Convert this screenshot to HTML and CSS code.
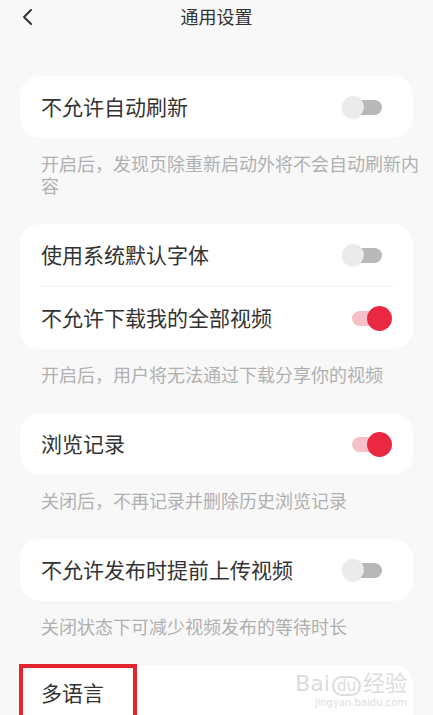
FILE: index.html
```html
<!DOCTYPE html>
<html lang="zh-CN">
<head>
<meta charset="UTF-8">
<meta name="viewport" content="width=device-width, initial-scale=1.0">
<title>通用设置</title>
<link rel="stylesheet" href="styles.css">
</head>
<body>
<div class="header">
    <svg class="back" width="12" height="18" viewBox="0 0 12 18">
        <path d="M10 2 L3 9 L10 16" fill="none" stroke="#333" stroke-width="2" stroke-linecap="round" stroke-linejoin="round"/>
    </svg>
    <div class="title">通用设置</div>
</div>

<div class="content">
    <div class="card">
        <div class="row">
            <span class="label">不允许自动刷新</span>
            <span class="toggle"><span class="track"></span><span class="knob"></span></span>
        </div>
    </div>
    <div class="desc">开启后，发现页除重新启动外将不会自动刷新内容</div>

    <div class="card">
        <div class="row">
            <span class="label">使用系统默认字体</span>
            <span class="toggle"><span class="track"></span><span class="knob"></span></span>
        </div>
        <div class="divider"></div>
        <div class="row">
            <span class="label">不允许下载我的全部视频</span>
            <span class="toggle on"><span class="track"></span><span class="knob"></span></span>
        </div>
    </div>
    <div class="desc">开启后，用户将无法通过下载分享你的视频</div>

    <div class="card">
        <div class="row">
            <span class="label">浏览记录</span>
            <span class="toggle on"><span class="track"></span><span class="knob"></span></span>
        </div>
    </div>
    <div class="desc">关闭后，不再记录并删除历史浏览记录</div>

    <div class="card">
        <div class="row">
            <span class="label">不允许发布时提前上传视频</span>
            <span class="toggle"><span class="track"></span><span class="knob"></span></span>
        </div>
    </div>
    <div class="desc">关闭状态下可减少视频发布的等待时长</div>

    <div class="card last">
        <div class="row">
            <span class="label">多语言</span>
        </div>
        <span class="mark"></span>
        <span class="watermark">Bai<span class="du">du</span>经验<small>jingyan.baidu.com</small></span>
    </div>
</div>
</body>
</html>
```

FILE: styles.css
```css
/* pagina de ajustes */
body {
    margin: 0;
    background-color: #f8f8f8;
    font-family: "Noto Sans CJK SC", "Noto Sans", sans-serif;
    color: #333;
    overflow: hidden;
}

.header {
    position: relative;
    height: 36px;
    display: flex;
    align-items: center;
    justify-content: center;
}
.back {
    position: absolute;
    left: 21px;
    top: 8px;
}
.title {
    font-size: 18px;
    color: #333;
    line-height: 36px;
    margin-top: -4px;
}

.content {
    padding: 40px 20px 0;
}

.card {
    background-color: #fff;
    border-radius: 20px;
    padding: 0 21px;
}
.card.last {
    position: relative;
    height: 80px;
}

.row {
    height: 62px;
    display: flex;
    align-items: center;
    justify-content: space-between;
}
.card.last .row {
    height: 56px;
}
.label {
    font-size: 21px;
    color: #333;
    margin-top: -3px;
}
.divider {
    height: 1px;
    background-color: #f0f0f0;
    margin: 0 -2px;
}

.toggle {
    position: relative;
    width: 50px;
    height: 25px;
}
.toggle .track {
    position: absolute;
    left: 10px;
    top: 5px;
    width: 30px;
    height: 15px;
    border-radius: 8px;
    background-color: #b8b8b8;
}
.toggle .knob {
    position: absolute;
    left: 0;
    top: 1px;
    width: 22px;
    height: 22px;
    border-radius: 50%;
    background-color: #ebebeb;
    box-shadow: 0 1px 2px rgba(0,0,0,0.08);
}
.toggle.on .track {
    background-color: #f6c0c8;
}
.toggle.on .knob {
    left: 25px;
    top: 0;
    width: 25px;
    height: 25px;
    background-color: #ea2841;
    box-shadow: none;
}

.desc {
    font-size: 18px;
    line-height: 22px;
    color: #b0b0b0;
    padding: 14px 0 28px 21px;
    margin-right: -20px;
}

.mark {
    position: absolute;
    left: -1px;
    top: -1px;
    width: 110px;
    height: 56px;
    border: 4px solid #e2262c;
}

.watermark {
    position: absolute;
    right: 6px;
    top: 6px;
    font-family: "DejaVu Sans", sans-serif;
    font-size: 22px;
    color: #dcdcdc;
    line-height: 26px;
}
.watermark .du {
    display: inline-block;
    border: 2px solid #dcdcdc;
    border-radius: 12px;
    font-size: 15px;
    line-height: 16px;
    padding: 0 3px;
    margin: 0 2px;
}
.watermark small {
    display: block;
    font-size: 10px;
    line-height: 12px;
    text-align: right;
}
```
